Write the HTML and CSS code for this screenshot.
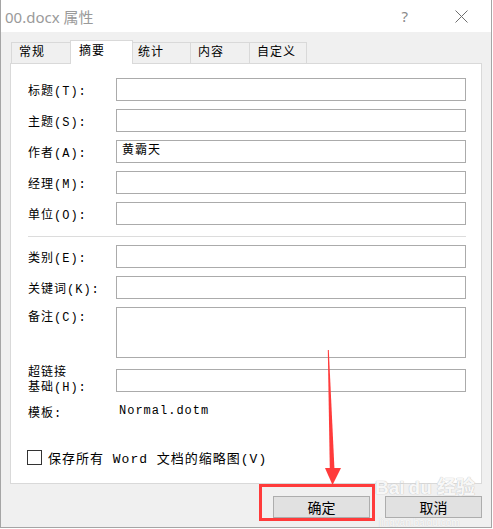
FILE: index.html
```html
<!DOCTYPE html>
<html lang="zh">
<head>
<meta charset="utf-8">
<title>00.docx 属性</title>
<link rel="stylesheet" href="styles.css">
</head>
<body>
<div class="window">
  <div class="titlebar">
    <span class="title">00.docx 属性</span>
    <span class="help">?</span>
    <svg class="close" width="13" height="13" viewBox="0 0 13 13"><path d="M0.5 0.5 L12.5 12.5 M12.5 0.5 L0.5 12.5" stroke="#6e6e6e" stroke-width="1" fill="none"/></svg>
  </div>
  <div class="body">
    <div class="tabs">
      <div class="tab">常规</div>
      <div class="tab active">摘要</div>
      <div class="tab after-active">统计</div>
      <div class="tab">内容</div>
      <div class="tab last">自定义</div>
    </div>
    <div class="panel">
      <div class="form">
        <div class="label">标题(T):</div><div class="field"></div>
        <div class="label">主题(S):</div><div class="field"></div>
        <div class="label">作者(A):</div><div class="field">黄霸天</div>
        <div class="label">经理(M):</div><div class="field"></div>
        <div class="label">单位(O):</div><div class="field"></div>
        <div class="sep"></div>
        <div class="label">类别(E):</div><div class="field"></div>
        <div class="label">关键词(K):</div><div class="field"></div>
        <div class="label top">备注(C):</div><div class="field tall"></div>
        <div class="label two">超链接<br>基础(H):</div><div class="field shift"></div>
        <div class="label">模板:</div><div class="value">Normal.dotm</div>
      </div>
      <div class="check"><span class="box"></span><span class="check-text">保存所有 Word 文档的缩略图(V)</span></div>
    </div>
    <div class="buttons">
      <div class="btn">确定</div>
      <div class="btn">取消</div>
    </div>
  </div>
  <div class="watermark">Bai<span class="wm-gap"></span>du 经验</div>
  <div class="watermark-url">jingyan.baidu.com</div>
  <div class="annot"></div>
  <svg class="arrow" width="493" height="529" viewBox="0 0 493 529">
    <polygon points="327.8,350 328.8,350 334.5,470 329.8,470" fill="#ff3b3b"/>
    <polygon points="325,468 341,468 332.5,485" fill="#ff3b3b"/>
  </svg>
</div>
</body>
</html>
```

FILE: styles.css
```css
html, body {
  margin: 0;
  padding: 0;
  background: #fff;
}

.window {
  position: relative;
  width: 492px;
  height: 528px;
  box-sizing: border-box;
  border: 1px solid #a5a5a5;
  border-top: none;
  background: #f0f0f0;
  font-family: "Liberation Mono", "Noto Sans CJK SC", monospace;
  font-size: 12px;
  color: #000;
  overflow: hidden;
}

.titlebar {
  height: 32px;
  background: #fff;
  display: flex;
  align-items: center;
  padding: 0 23px 0 4px;
}

.title {
  flex: 1;
  font-family: "Noto Sans", "Noto Sans CJK SC", sans-serif;
  font-size: 15px;
  color: #9a9a9a;
}

.help {
  font-family: "Noto Sans", sans-serif;
  font-size: 15px;
  color: #8a8a8a;
  margin-right: 47px;
}

.close {
  display: block;
}

.body {
  padding: 8px 9px 0 9px;
}

.tabs {
  display: flex;
  align-items: flex-end;
  height: 23px;
  padding-left: 1px;
}

.tab {
  width: 59px;
  height: 21px;
  box-sizing: border-box;
  border: 1px solid #d9d9d9;
  border-bottom: none;
  border-right: none;
  padding-left: 7px;
  line-height: 20px;
  letter-spacing: 1px;
  background: #f0f0f0;
}

.tab.active {
  position: relative;
  z-index: 1;
  width: 63px;
  height: 24px;
  margin-bottom: -1px;
  border-right: 1px solid #d9d9d9;
  background: #fff;
  padding-left: 8px;
  line-height: 22px;
}

.tab.after-active {
  border-left: none;
  width: 57px;
  padding-left: 5px;
}

.tab.last {
  border-right: 1px solid #d9d9d9;
  width: 58px;
}

.panel {
  height: 421px;
  box-sizing: border-box;
  background: #fff;
  border: 1px solid #d9d9d9;
  padding: 14px 15px 0 17px;
}

.form {
  display: grid;
  grid-template-columns: 88px 1fr;
  row-gap: 8px;
}

.label {
  align-self: center;
  letter-spacing: 1px;
  white-space: nowrap;
}

.label.top {
  align-self: start;
  line-height: 23px;
}

.label.two {
  align-self: start;
  line-height: 15px;
  margin-bottom: -4px;
}

.shift {
  margin-top: 3px;
}

.field {
  height: 23px;
  box-sizing: border-box;
  border: 1px solid #ababab;
  background: #fff;
  padding-left: 5px;
  line-height: 21px;
  letter-spacing: 1px;
}

.field.tall {
  height: 51px;
}

.value {
  align-self: center;
  padding-left: 3px;
  letter-spacing: 1px;
  line-height: 23px;
}

.sep {
  grid-column: 1 / -1;
  height: 1px;
  background: #dcdcdc;
  margin-top: 3px;
}

.check {
  display: flex;
  align-items: center;
  gap: 6px;
  margin-top: 27px;
  margin-left: -1px;
  height: 15px;
}

.check-text {
  font-size: 13px;
  letter-spacing: 1px;
  white-space: nowrap;
}

.box {
  width: 15px;
  height: 15px;
  box-sizing: border-box;
  border: 1px solid #333;
  background: #fff;
}

.buttons {
  display: flex;
  justify-content: flex-end;
  gap: 15px;
  margin-top: 12px;
}

.btn {
  width: 97px;
  height: 22px;
  box-sizing: border-box;
  border: 1px solid #adadad;
  background: #e1e1e1;
  font-family: "Noto Sans CJK SC", sans-serif;
  font-size: 14px;
  display: flex;
  align-items: center;
  justify-content: center;
}

.annot {
  position: absolute;
  left: 258px;
  top: 484px;
  width: 116px;
  height: 37px;
  box-sizing: border-box;
  border: 3px solid #ff3b3b;
}

.arrow {
  position: absolute;
  left: -1px;
  top: 0;
  pointer-events: none;
}

.watermark {
  position: absolute;
  left: 374px;
  top: 480px;
  font-family: "Liberation Sans", "Noto Sans CJK SC", sans-serif;
  font-size: 19px;
  font-weight: bold;
  line-height: 16px;
  color: rgba(255, 255, 255, 0.9);
  text-shadow: 0 0 1px #c4c4c4, 0 0 1px #c4c4c4;
  pointer-events: none;
}

.watermark-url {
  position: absolute;
  left: 378px;
  top: 518px;
  font-family: "Liberation Sans", sans-serif;
  font-size: 10px;
  line-height: 10px;
  color: rgba(255, 255, 255, 0.9);
  text-shadow: 0 0 1px #c4c4c4;
  pointer-events: none;
}

.wm-gap {
  display: inline-block;
  width: 4px;
}
```
